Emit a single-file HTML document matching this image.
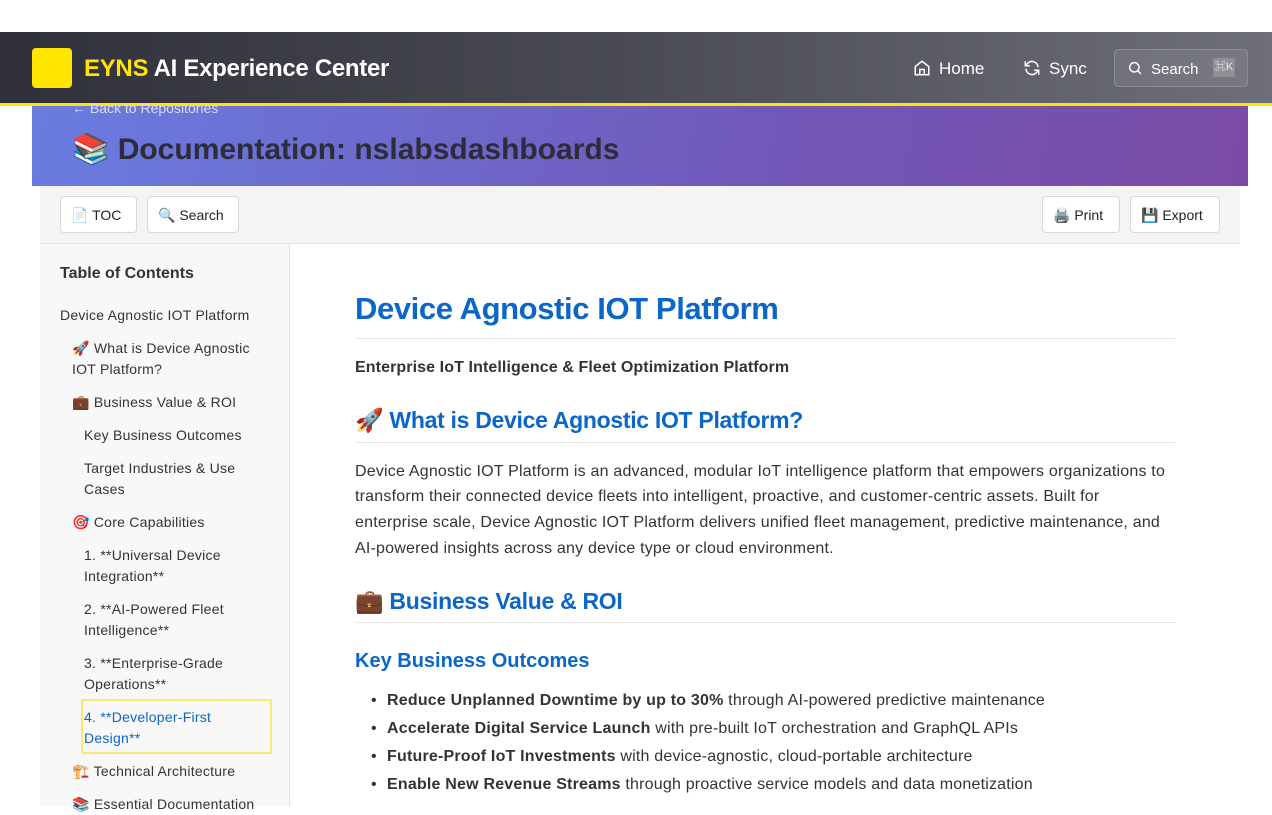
<!DOCTYPE html>
<html><head><meta charset="utf-8"><style>
*{margin:0;padding:0;box-sizing:border-box}
body{width:1272px;height:806px;overflow:hidden;background:#fff;font-family:"Liberation Sans","Noto Sans CJK JP",sans-serif;position:relative}
.a{position:absolute;white-space:nowrap}
.hdr{left:0;top:32px;width:1272px;height:71px;background:linear-gradient(90deg,#2f3039,#4a4b55 50%,#6e6f79);}
.yl{left:0;top:103px;width:1272px;height:3px;background:#ffe500}
.logo{left:32px;top:48px;width:40px;height:40px;background:#ffe500;border-radius:4px}
.ban{left:32px;top:106px;width:1216px;height:80px;background:linear-gradient(100deg,#6a7ce0,#7158b9 60%,#7a4ba6)}
.tb{left:40px;top:186px;width:1200px;height:58px;background:#f4f4f4;border-bottom:1px solid #e4e4e4}
.btn{position:absolute;top:196px;height:37px;background:#fff;border:1px solid #d8d8d8;border-radius:4px;font-size:14px;color:#222;line-height:37px;padding:0 10px;white-space:nowrap}
.side{left:40px;top:244px;width:250px;height:562px;background:#f8f8f8;border-right:1px solid #e2e2e2}
.t{font-size:14px;color:#333;line-height:21px;letter-spacing:0.25px}
.blue{color:#0a66c8}
.p{font-size:16px;color:#333;left:355px;letter-spacing:0.2px}
.b{font-size:16px;color:#333;letter-spacing:0.2px}
.hr{position:absolute;left:355px;width:820px;height:1px;background:#e6e6e6}
</style></head><body>
<div class="a hdr"></div><div class="a yl"></div><div class="a logo"></div>
<div class="a" style="left:84px;top:55px;font-size:24px;font-weight:bold;color:#fff;letter-spacing:-0.3px"><span style="color:#ffe500">EYNS</span> AI Experience Center</div>
<svg class="a" style="left:913px;top:59px" width="18" height="18" viewBox="0 0 24 24" fill="none" stroke="#fff" stroke-width="2"><path d="M3 10l9-7 9 7v11H3z"/><path d="M9 21v-7h6v7"/></svg>
<div class="a" style="left:939px;top:59px;font-size:17px;color:#fff">Home</div>
<svg class="a" style="left:1023px;top:59px" width="18" height="18" viewBox="0 0 24 24" fill="none" stroke="#fff" stroke-width="2"><path d="M20 11a8 8 0 0 0-14-5l-3 3M4 13a8 8 0 0 0 14 5l3-3"/><path d="M3 3v6h6M21 21v-6h-6"/></svg>
<div class="a" style="left:1049px;top:59px;font-size:17px;color:#fff">Sync</div>
<div class="a" style="left:1114px;top:49px;width:134px;height:38px;border:1px solid #8a8b94;border-radius:4px;background:rgba(255,255,255,0.08)"></div>
<svg class="a" style="left:1127px;top:60px" width="16" height="16" viewBox="0 0 24 24" fill="none" stroke="#fff" stroke-width="2.2"><circle cx="11" cy="11" r="7"/><path d="M16 16l5 5"/></svg>
<div class="a" style="left:1151px;top:61px;font-size:15px;color:#fff">Search</div>
<div class="a" style="left:1213px;top:58px;width:22px;height:19px;background:#8e8f97;border-radius:2px;font-size:11px;color:#eee;text-align:center;line-height:19px">⌘K</div>
<div class="a ban"></div>
<div class="a" style="left:72px;top:100px;font-size:14px;color:#dcdcf5">← Back to Repositories</div>
<div class="a" style="left:72px;top:132px;font-size:30px;font-weight:bold;color:#2c2c3a;letter-spacing:0px">📚 Documentation: nslabsdashboards</div>
<div class="a tb"></div>
<div class="btn" style="left:60px;width:77px">📄 TOC</div>
<div class="btn" style="left:147px;width:92px">🔍 Search</div>
<div class="btn" style="left:1042px;width:78px">🖨️ Print</div>
<div class="btn" style="left:1130px;width:90px">💾 Export</div>
<div class="a side"></div>
<div class="a" style="left:60px;top:265px;font-size:16px;font-weight:bold;color:#333">Table of Contents</div>
<div class="a t" style="left:60px;top:305px">Device Agnostic IOT Platform</div>
<div class="a t" style="left:72px;top:338px">🚀 What is Device Agnostic<br>IOT Platform?</div>
<div class="a t" style="left:72px;top:392px">💼 Business Value &amp; ROI</div>
<div class="a t" style="left:84px;top:425px">Key Business Outcomes</div>
<div class="a t" style="left:84px;top:458px">Target Industries &amp; Use<br>Cases</div>
<div class="a t" style="left:72px;top:512px">🎯 Core Capabilities</div>
<div class="a t" style="left:84px;top:545px">1. **Universal Device<br>Integration**</div>
<div class="a t" style="left:84px;top:599px">2. **AI-Powered Fleet<br>Intelligence**</div>
<div class="a t" style="left:84px;top:653px">3. **Enterprise-Grade<br>Operations**</div>
<div class="a" style="left:81px;top:699px;width:191px;height:55px;border:2px solid #fbe774"></div>
<div class="a t blue" style="left:84px;top:707px">4. **Developer-First<br>Design**</div>
<div class="a t" style="left:72px;top:761px">🏗️ Technical Architecture</div>
<div class="a t" style="left:72px;top:794px">📚 Essential Documentation</div>

<div class="a blue" style="left:355px;top:291px;font-size:31px;font-weight:bold;letter-spacing:-0.4px">Device Agnostic IOT Platform</div>
<div class="hr" style="top:338px"></div>
<div class="a" style="left:355px;top:359px;font-size:16px;font-weight:bold;color:#333;letter-spacing:0.1px">Enterprise IoT Intelligence &amp; Fleet Optimization Platform</div>
<div class="a blue" style="left:355px;top:407px;font-size:23px;font-weight:bold;letter-spacing:-0.3px">🚀 What is Device Agnostic IOT Platform?</div>
<div class="hr" style="top:442px"></div>
<div class="a p" style="top:463px">Device Agnostic IOT Platform is an advanced, modular IoT intelligence platform that empowers organizations to</div>
<div class="a p" style="top:488px">transform their connected device fleets into intelligent, proactive, and customer-centric assets. Built for</div>
<div class="a p" style="top:514px">enterprise scale, Device Agnostic IOT Platform delivers unified fleet management, predictive maintenance, and</div>
<div class="a p" style="top:540px">AI-powered insights across any device type or cloud environment.</div>
<div class="a blue" style="left:355px;top:588px;font-size:23px;font-weight:bold;letter-spacing:-0.3px">💼 Business Value &amp; ROI</div>
<div class="hr" style="top:622px"></div>
<div class="a blue" style="left:355px;top:650px;font-size:20px;font-weight:bold">Key Business Outcomes</div>
<div class="a" style="left:371px;top:692px;font-size:16px;color:#333">•</div>
<div class="a" style="left:371px;top:720px;font-size:16px;color:#333">•</div>
<div class="a" style="left:371px;top:748px;font-size:16px;color:#333">•</div>
<div class="a" style="left:371px;top:776px;font-size:16px;color:#333">•</div>
<div class="a b" style="left:387px;top:692px"><b>Reduce Unplanned Downtime by up to 30%</b> through AI-powered predictive maintenance</div>
<div class="a b" style="left:387px;top:720px"><b>Accelerate Digital Service Launch</b> with pre-built IoT orchestration and GraphQL APIs</div>
<div class="a b" style="left:387px;top:748px"><b>Future-Proof IoT Investments</b> with device-agnostic, cloud-portable architecture</div>
<div class="a b" style="left:387px;top:776px"><b>Enable New Revenue Streams</b> through proactive service models and data monetization</div>
</body></html>
